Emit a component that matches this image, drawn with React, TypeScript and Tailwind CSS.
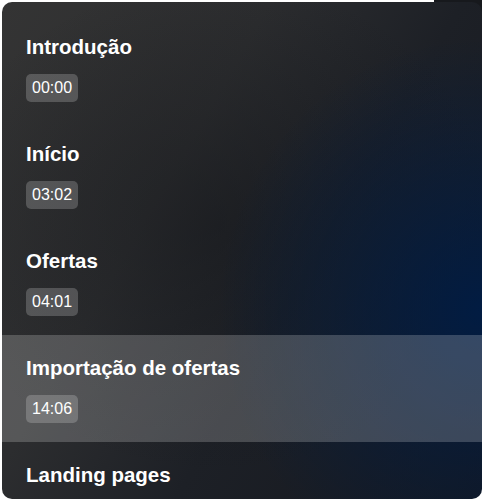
import React from 'react';

interface Chapter {
    title: string;
    time: string;
}

const chapters: Chapter[] = [
    { title: 'Introdução', time: '00:00' },
    { title: 'Início', time: '03:02' },
    { title: 'Ofertas', time: '04:01' },
    { title: 'Importação de ofertas', time: '14:06' },
    { title: 'Landing pages', time: '18:40' },
];

const App: React.FC = () => {
    const active = 3;

    return (
        <div className="relative w-[482px] h-[501px] bg-white pt-[2px] pl-[2px] font-['Liberation_Sans',Arial,sans-serif] overflow-hidden">
            <div className="absolute top-0 right-0 w-[48px] h-[12px] bg-[#17191d]" />
            <div className="relative h-[497px] w-[480px] rounded-[10px] overflow-hidden pt-3 bg-[radial-gradient(ellipse_55%_55%_at_100%_62%,rgba(0,28,68,0.95)_0%,rgba(0,28,68,0)_100%),radial-gradient(ellipse_60%_50%_at_45%_45%,rgba(20,22,26,0.5)_0%,rgba(20,22,26,0)_100%),linear-gradient(120deg,#343434_0%,#2c2d2f_35%,#1d2026_60%,#141820_100%)]">
                {chapters.map((c, i) => (
                    <div
                        key={c.title}
                        className={`px-6 pt-[19px] pb-[19px] ${i === active ? 'bg-white/20' : ''}`}
                    >
                        <h3 className="text-[20.5px] leading-[28px] font-bold text-white">{c.title}</h3>
                        <span className="mt-[13px] inline-flex h-7 items-center rounded-[5px] bg-white/20 px-[6px] text-[16px] text-white">
                            {c.time}
                        </span>
                    </div>
                ))}
            </div>
        </div>
    );
};

export default App;
